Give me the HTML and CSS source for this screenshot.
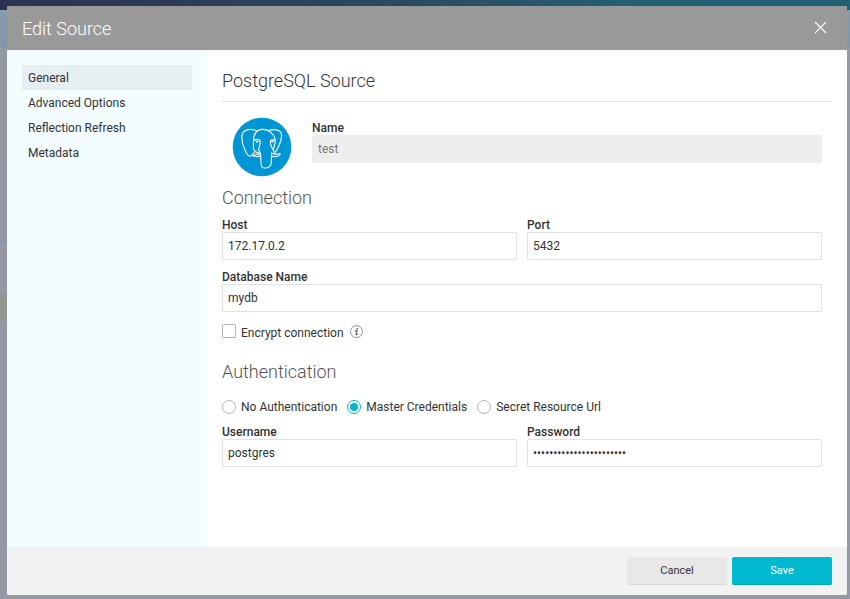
FILE: index.html
```
<!DOCTYPE html>
<html lang="en">
<head>
<meta charset="utf-8">
<title>Edit Source</title>
<link rel="stylesheet" href="styles.css">
</head>
<body>
<div class="modal">
  <header class="modal-header">
    <h1 class="modal-title">Edit Source</h1>
    <svg class="close" width="13" height="13" viewBox="0 0 13 13"><path d="M1 1l11 11M12 1L1 12" stroke="#fff" stroke-width="1.1" fill="none"/></svg>
  </header>
  <div class="modal-body">
    <nav class="sidebar">
      <a class="tab active">General</a>
      <a class="tab">Advanced Options</a>
      <a class="tab">Reflection Refresh</a>
      <a class="tab">Metadata</a>
    </nav>
    <main class="content">
      <h2 class="source-title">PostgreSQL Source</h2>
      <div class="name-row">
        <svg class="logo" width="60" height="60" viewBox="0 0 60 60">
          <circle cx="30" cy="30" r="29.3" fill="#0095d5"/>
          <g fill="none" stroke="#fff" stroke-width="1.1" stroke-linecap="round" stroke-linejoin="round">
            <path d="M24.300 13.800C19 11.500 10 11.500 9.800 20C9.800 27 14.500 38.800 18 39.300C19.800 39.600 21 36.500 22.500 35.500"/>
            <path d="M37.500 13.300C43 11.500 49.800 13.500 49.600 18.500C49.500 24 46 32 42.800 35.500"/>
            <path d="M21.500 24C21.500 16.500 25 12.400 31 12.400C37 12.400 42 17 43.300 22.500C43.800 27 41 30 41.500 33.500L42.900 36.800"/>
            <path d="M21.500 24C23.500 22 27.800 21.500 28.200 24.500C28.700 28 26.700 29.500 26.700 32.500C26.700 34.500 28.600 35 28.500 37"/>
            <path d="M21.500 24C21.200 28 21.300 31 22 33C23 35.500 26.500 36 28.500 36.800C28.800 40 28.800 45 29.200 48C29.700 50.600 31.500 51.300 34 51C37 50.600 39 49 39.200 46L39.700 36"/>
            <path d="M42.500 23.300C40.500 22 38.500 22.500 38.300 24.500C38.200 28 40 31 41.500 33.500"/>
            <path d="M20.500 38.500C24 40.500 28.500 40 28.500 36.800C26 35.800 24.500 38.500 20.500 38.500M39.700 36.200C41.500 38 45 36.700 48.300 36.900C47 39.700 42.500 40.300 39.600 39.300"/>
            <path d="M24 24.200l2.100.3-1 .9zM39.600 24.200l1.800-.3-.7 1.100z"/>
          </g>
        </svg>
        <div class="field name-field">
          <label class="label">Name</label>
          <div class="input disabled">test</div>
        </div>
      </div>
      <h3 class="section">Connection</h3>
      <div class="row">
        <div class="field"><label class="label">Host</label><div class="input">172.17.0.2</div></div>
        <div class="field"><label class="label">Port</label><div class="input">5432</div></div>
      </div>
      <div class="row database">
        <div class="field"><label class="label">Database Name</label><div class="input">mydb</div></div>
      </div>
      <div class="check-row">
        <span class="checkbox"></span>
        <span class="check-label">Encrypt connection</span>
        <svg class="info" width="14" height="14" viewBox="0 0 14 14"><circle cx="6.500" cy="6.600" r="6" fill="none" stroke="#888" stroke-width=".9"/><circle cx="7.300" cy="3.600" r=".9" fill="#666"/><path d="M5 5.800L7.100 5.500L6.100 9.400Q6 10.200 7.800 9" fill="none" stroke="#666" stroke-width="1.200"/></svg>
      </div>
      <h3 class="section auth">Authentication</h3>
      <div class="radios">
        <span class="option"><span class="radio"></span>No Authentication</span>
        <span class="option"><span class="radio selected"></span>Master Credentials</span>
        <span class="option"><span class="radio"></span>Secret Resource Url</span>
      </div>
      <div class="row">
        <div class="field"><label class="label">Username</label><div class="input">postgres</div></div>
        <div class="field"><label class="label">Password</label><div class="input">•••••••••••••••••••••••</div></div>
      </div>
    </main>
  </div>
  <footer class="modal-footer">
    <button class="button">Cancel</button>
    <button class="button primary">Save</button>
  </footer>
</div>
</body>
</html>
```
FILE: styles.css
```
* { box-sizing: border-box; }
body {
  margin: 0;
  height: 599px;
  padding: 6px 3px 4px 7px;
  overflow: hidden;
  font: 12px/14px Roboto, "Liberation Sans", sans-serif;
  color: #333;
  background:
    linear-gradient(90deg, #2c3350, #2b4560 40%, #255f74 75%, #226074) 0 0 / 100% 10px no-repeat,
    linear-gradient(#879bab, #8496a8) 0 10px / 100% 38px no-repeat,
    linear-gradient(#8a98ad, #8a98ad) 0 240px / 7px 4px no-repeat,
    linear-gradient(#929690, #929690) 0 294px / 7px 27px no-repeat,
    #9499a5;
}
.modal {
  display: flex;
  flex-direction: column;
  height: 589px;
  border-radius: 2px;
  overflow: hidden;
  background: #fff;
}
.modal-header {
  display: flex;
  align-items: center;
  justify-content: space-between;
  height: 44px;
  padding: 0 20px 0 15px;
  background: #999;
  color: #fff;
}
.modal-title, .source-title, .section { margin: 0; font-size: 18px; font-weight: 300; }
.modal-title { padding-top: 2px; line-height: 44px; }
.close { margin-bottom: 1px; }
.modal-body { display: flex; flex: 1; }
.sidebar { width: 200px; padding: 15px; background: #f3fcff; }
.tab { display: block; height: 25px; padding-left: 6px; line-height: 26px; }
.active { background: #e7eef1; }
.content { flex: 1; padding: 15px 15px 0; }
.source-title { height: 37px; line-height: 32px; border-bottom: 1px solid #e1e1e1; }
.name-row { display: flex; padding: 15px 10px 0; }
.logo { margin-right: 20px; }
.field { flex: 1; }
.name-field { padding-top: 4px; }
.label { display: block; font-weight: 500; line-height: 14px; }
.input {
  height: 28px;
  padding: 0 5px;
  border: 1px solid #e1e1e1;
  border-radius: 2px;
  line-height: 26px;
}
.disabled { background: #eee; border-color: #eee; color: #777; }
.section { height: 41px; line-height: 42px; color: #555; }
.row { display: flex; gap: 10px; padding-right: 10px; }
.database { margin-top: 10px; }
.check-row { display: flex; height: 14px; margin-top: 12px; }
.checkbox { width: 14px; height: 14px; margin-right: 5px; border: 1px solid #b5b5b5; border-radius: 1px; }
.check-label { line-height: 18px; }
.info { margin: 1px 0 0 6px; }
.auth { height: 62px; line-height: 68px; }
.radios { display: flex; gap: 10px; height: 25px; }
.option { display: flex; align-items: center; height: 14px; line-height: 14px; }
.radio { display: grid; place-items: center; width: 14px; height: 14px; margin-right: 5px; border: 1px solid #b5b5b5; border-radius: 50%; }
.selected { border-color: #00b9cf; }
.selected::after { content: ""; width: 8px; height: 8px; border-radius: 50%; background: #00b9cf; }
.modal-footer {
  display: flex;
  justify-content: flex-end;
  gap: 5px;
  height: 48px;
  padding: 10px 15px;
  background: #f2f2f2;
}
.button {
  width: 100px;
  height: 28px;
  padding: 0;
  border: 0;
  border-bottom: 1px solid #d9d9d9;
  border-radius: 2px;
  background: #e8e8e8;
  color: #333;
  font: 11px/26px Roboto, "Liberation Sans", sans-serif;
}
.primary { border-color: #00a6ba; background: #00b9cf; color: #fff; }
```
